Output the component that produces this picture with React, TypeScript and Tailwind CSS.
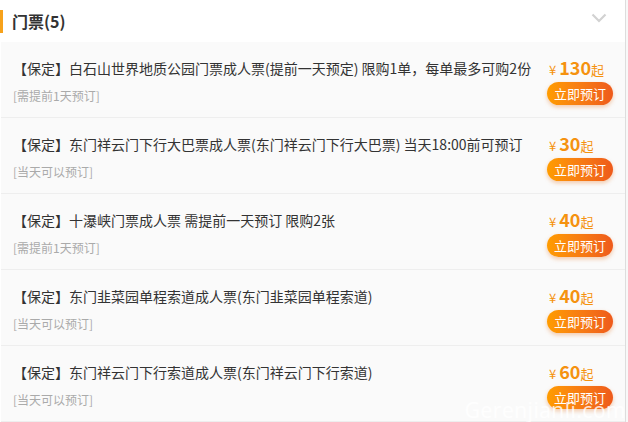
const TICKETS = [
  { title: '【保定】白石山世界地质公园门票成人票(提前一天预定) 限购1单，每单最多可购2份', note: '[需提前1天预订]', price: '130' },
  { title: '【保定】东门祥云门下行大巴票成人票(东门祥云门下行大巴票) 当天18:00前可预订', note: '[当天可以预订]', price: '30' },
  { title: '【保定】十瀑峡门票成人票 需提前一天预订 限购2张', note: '[需提前1天预订]', price: '40' },
  { title: '【保定】东门韭菜园单程索道成人票(东门韭菜园单程索道)', note: '[当天可以预订]', price: '40' },
  { title: '【保定】东门祥云门下行索道成人票(东门祥云门下行索道)', note: '[当天可以预订]', price: '60' },
];

export default function App() {
  return (
    <div
      className="relative flex w-[628px] h-[422px] overflow-hidden bg-white"
      style={{ fontFamily: '"Microsoft YaHei", "Noto Sans CJK SC", "Noto Sans", sans-serif' }}
    >
      <div className="w-[625px] flex flex-col">
        {/* header */}
        <div className="h-[42px] flex items-center justify-between shrink-0">
          <div className="flex items-center">
            <span className="w-[3px] h-[23px] bg-[#f7a21b]" />
            <h3 className="ml-[9px] text-[16px] font-bold text-[#333] leading-none">门票(5)</h3>
          </div>
          <svg width="16" height="10" viewBox="0 0 16 10" className="mr-[18px] -mt-[6px]">
            <polyline points="1.5,1.5 8,8 14.5,1.5" fill="none" stroke="#d2d2d2" strokeWidth="2.2" />
          </svg>
        </div>

        {/* list */}
        <div className="flex-1 bg-[#fafafa] ml-[1px]">
          {TICKETS.map((t, i) => (
            <div key={i} className="h-[76px] flex justify-between border-b border-[#eeeeee]">
              <div className="pl-[12px] pt-[16px]">
                <div className="text-[14px] leading-[20px] text-[#333]">{t.title}</div>
                <div className="mt-[10px] text-[12px] leading-[16px] text-[#aaa]">{t.note}</div>
              </div>
              <div className="w-[66px] mr-[12px] pt-[12px] shrink-0">
                <div className="pl-[2px] h-[24px] flex items-baseline text-[#f5920f] whitespace-nowrap">
                  <span className="text-[13px]">¥</span>
                  <span className="ml-[3px] text-[18px] font-bold">{t.price}</span>
                  <span className="text-[13px]">起</span>
                </div>
                <button className="mt-[4px] w-[66px] h-[23px] rounded-full bg-gradient-to-r from-[#ff9c00] to-[#ee5a1b] text-white text-[13px] leading-[23px] shadow-[0_2px_4px_rgba(230,110,20,0.35)]">
                  立即预订
                </button>
              </div>
            </div>
          ))}
        </div>
      </div>
      <div className="w-[1px] bg-[#dddddd]" />
      <div className="flex-1 bg-[#f8f8f8]" />

      <span className="absolute right-[2px] bottom-[1px] text-[21px] leading-none text-white/80 tracking-[0.5px]" style={{ fontFamily: '"Open Sans", sans-serif' }}>
        Gerenjianli.com
      </span>
    </div>
  );
}
